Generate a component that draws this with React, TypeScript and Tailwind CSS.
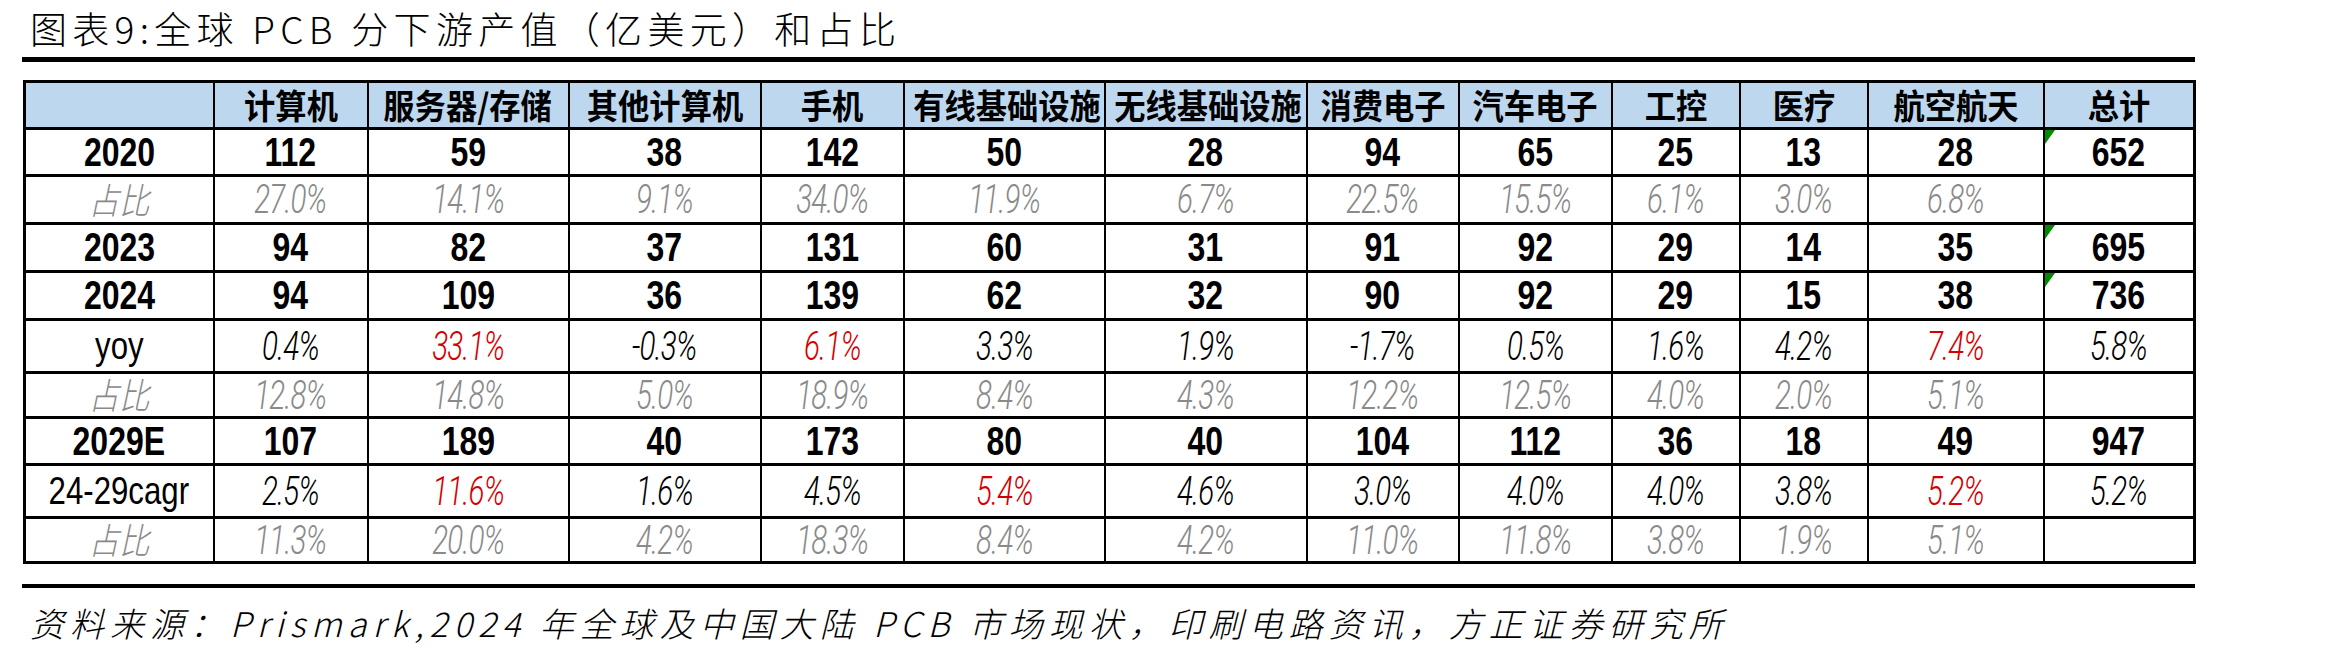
import React from "react";

type Kind = "num" | "share" | "rate";

const cols = [
  "",
  "计算机",
  "服务器/存储",
  "其他计算机",
  "手机",
  "有线基础设施",
  "无线基础设施",
  "消费电子",
  "汽车电子",
  "工控",
  "医疗",
  "航空航天",
  "总计",
];

const widths = [
  "w-[189px]",
  "w-[154px]",
  "w-[201px]",
  "w-[192px]",
  "w-[143px]",
  "w-[201px]",
  "w-[202px]",
  "w-[152px]",
  "w-[153px]",
  "w-[128px]",
  "w-[128px]",
  "w-[176px]",
  "w-[151px]",
];

const rows: { label: string; kind: Kind; h: string; cells: string[]; red?: number[]; flag?: boolean }[] = [
  { label: "2020", kind: "num", h: "h-[47px]", flag: true, cells: ["112", "59", "38", "142", "50", "28", "94", "65", "25", "13", "28", "652"] },
  { label: "占比", kind: "share", h: "h-[48px]", cells: ["27.0%", "14.1%", "9.1%", "34.0%", "11.9%", "6.7%", "22.5%", "15.5%", "6.1%", "3.0%", "6.8%", ""] },
  { label: "2023", kind: "num", h: "h-[48px]", flag: true, cells: ["94", "82", "37", "131", "60", "31", "91", "92", "29", "14", "35", "695"] },
  { label: "2024", kind: "num", h: "h-[48px]", flag: true, cells: ["94", "109", "36", "139", "62", "32", "90", "92", "29", "15", "38", "736"] },
  { label: "yoy", kind: "rate", h: "h-[53px]", red: [1, 3, 10], cells: ["0.4%", "33.1%", "-0.3%", "6.1%", "3.3%", "1.9%", "-1.7%", "0.5%", "1.6%", "4.2%", "7.4%", "5.8%"] },
  { label: "占比", kind: "share", h: "h-[45px]", cells: ["12.8%", "14.8%", "5.0%", "18.9%", "8.4%", "4.3%", "12.2%", "12.5%", "4.0%", "2.0%", "5.1%", ""] },
  { label: "2029E", kind: "num", h: "h-[47px]", cells: ["107", "189", "40", "173", "80", "40", "104", "112", "36", "18", "49", "947"] },
  { label: "24-29cagr", kind: "rate", h: "h-[53px]", red: [1, 4, 10], cells: ["2.5%", "11.6%", "1.6%", "4.5%", "5.4%", "4.6%", "3.0%", "4.0%", "4.0%", "3.8%", "5.2%", "5.2%"] },
  { label: "占比", kind: "share", h: "h-[45px]", cells: ["11.3%", "20.0%", "4.2%", "18.3%", "8.4%", "4.2%", "11.0%", "11.8%", "3.8%", "1.9%", "5.1%", ""] },
];

function Cell({ kind, text, red }: { kind: Kind; text: string; red?: boolean }) {
  if (kind === "num") {
    return (
      <span className="inline-block scale-x-[0.8] font-['Liberation_Sans',sans-serif] text-[40px] font-bold leading-[38px] text-black">
        {text}
      </span>
    );
  }
  const color = kind === "share" ? "text-[#8a8a8a]" : red ? "text-[#d40000]" : "text-black";
  return (
    <span className={`inline-block scale-x-[0.78] scale-y-[1.08] font-['Roboto','Noto_Sans_CJK_SC',sans-serif] text-[38px] font-light italic leading-[36px] tracking-[-1px] ${color}`}>
      {text}
    </span>
  );
}

function Label({ kind, text }: { kind: Kind; text: string }) {
  if (kind === "num") return <Cell kind="num" text={text} />;
  if (kind === "share")
    return (
      <span className="inline-block scale-x-[0.85] font-['Noto_Sans_CJK_SC',sans-serif] text-[36px] font-light italic leading-[36px] text-[#8a8a8a]">
        {text}
      </span>
    );
  return (
    <span className="inline-block scale-x-[0.8] font-['Liberation_Sans',sans-serif] text-[39px] font-normal leading-[38px] text-black">
      {text}
    </span>
  );
}

export default function App() {
  return (
    <div className="h-[654px] w-[2333px] bg-white pl-[22px]">
      <div className="w-[2173px]">
        <div className="flex h-[57px] items-center pl-[8px] font-['Noto_Sans_CJK_SC',sans-serif] text-[37px] font-light tracking-[5.3px] text-black">
          图表9:全球 PCB 分下游产值（亿美元）和占比
        </div>
        <div className="h-[5px] bg-black" />

        <table className="mt-[18px] ml-[1px] w-[2170px] table-fixed border-collapse border-[3px] border-black">
          <colgroup>
            {widths.map((w, i) => (
              <col key={i} className={w} />
            ))}
          </colgroup>
          <thead>
            <tr className="h-[47px] bg-[#bdd7ee]">
              {cols.map((c, i) => (
                <th key={i} className="border-x-2 border-y-[3px] border-black p-0 text-center align-middle">
                  <span className="inline-block scale-x-[0.92] whitespace-nowrap font-['Noto_Sans_CJK_SC',sans-serif] text-[34px] font-bold leading-[38px] text-black">
                    {c}
                  </span>
                </th>
              ))}
            </tr>
          </thead>
          <tbody>
            {rows.map((r, ri) => (
              <tr key={ri} className={r.h}>
                <td className="border-x-2 border-y-[3px] border-black p-0 text-center align-middle">
                  <Label kind={r.kind} text={r.label} />
                </td>
                {r.cells.map((c, ci) => (
                  <td key={ci} className="relative border-x-2 border-y-[3px] border-black p-0 text-center align-middle">
                    {r.flag && ci === 11 && (
                      <svg className="absolute left-0 top-0" width="10" height="14" viewBox="0 0 10 14">
                        <polygon points="0,0 10,0 0,14" fill="#008a00" />
                      </svg>
                    )}
                    <Cell kind={r.kind} text={c} red={r.red?.includes(ci)} />
                  </td>
                ))}
              </tr>
            ))}
          </tbody>
        </table>

        <div className="mt-[20px] h-[4px] bg-black" />
        <div className="flex h-[68px] items-center pl-[8px] font-['Noto_Sans_CJK_SC',sans-serif] text-[34px] font-light italic tracking-[6px] text-black">
          资料来源：Prismark,2024 年全球及中国大陆 PCB 市场现状，印刷电路资讯，方正证券研究所
        </div>
      </div>
    </div>
  );
}
